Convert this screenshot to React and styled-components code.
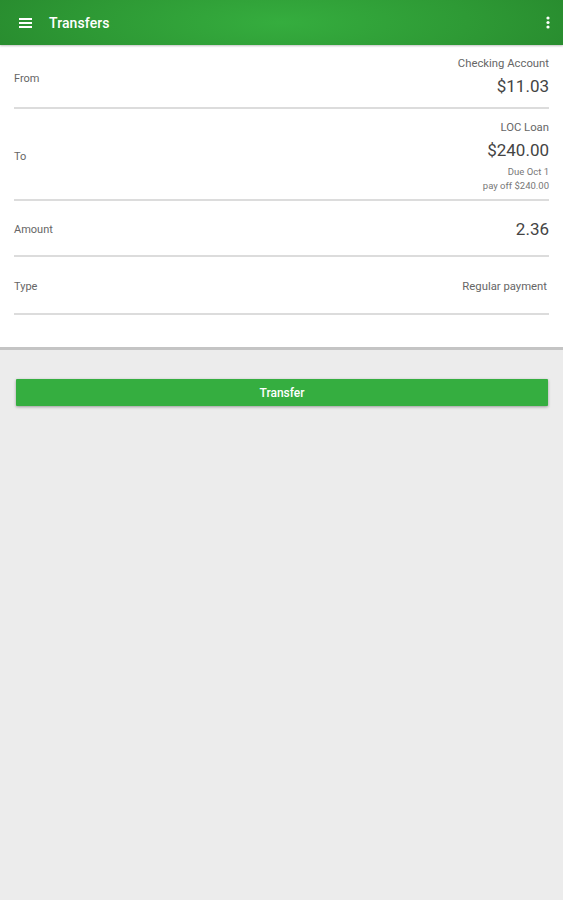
import styled, { createGlobalStyle } from "styled-components";

const Global = createGlobalStyle`
  html, body { margin: 0; padding: 0; background: #ececec; }
  body { font-family: Roboto, "Noto Sans", sans-serif; }
`;

const Page = styled.div`
  width: 563px;
  min-height: 900px;
  background: #ececec;
`;

const Bar = styled.header`
  height: 45px;
  display: flex;
  align-items: center;
  padding: 0 13px 0 19px;
  box-sizing: border-box;
  background: radial-gradient(ellipse 60% 180% at 50% 50%, #35ad3e 0%, #2e9a35 55%, #27882d 100%);
  color: #fff;
  position: relative;
  z-index: 1;
  box-shadow: 0 1px 2px rgba(0, 0, 0, 0.25);
`;

const Title = styled.h1`
  flex: 1;
  margin: 0 0 0 16px;
  font-size: 14px;
  font-weight: 500;
  letter-spacing: 0.1px;
`;

const Panel = styled.section`
  background: #fff;
  padding: 1px 14px 32px;
  border-bottom: 3px solid #c4c4c4;
`;

const Row = styled.div`
  display: flex;
  justify-content: space-between;
  align-items: center;
  height: ${({ h }) => h}px;
  padding-top: ${({ pt }) => pt || 0}px;
  border-bottom: 2px solid #dcdcdc;
  box-sizing: border-box;
`;

const Label = styled.span`
  font-size: 11px;
  color: #666;
`;

const Values = styled.div`
  display: flex;
  flex-direction: column;
  align-items: flex-end;
  padding-right: ${({ pr }) => pr || 0}px;
`;

const Small = styled.span`
  font-size: 11.3px;
  color: #666;
  line-height: 15px;
`;

const Big = styled.span`
  font-size: 17px;
  color: #444;
  line-height: 30px;
`;

const Tiny = styled.span`
  font-size: 9.5px;
  color: #777;
  line-height: 14px;
`;

const Action = styled.div`
  padding: 29px 15px 0 16px;
`;

const Button = styled.button`
  width: 100%;
  height: 27px;
  border: none;
  border-radius: 1px;
  background: #35ae40;
  color: #fff;
  font-family: Roboto, sans-serif;
  font-size: 12px;
  font-weight: 500;
  box-shadow: 0 1px 3px rgba(0, 0, 0, 0.35);
`;

const Menu = () => (
  <svg width="14" height="12" viewBox="0 0 14 12">
    <rect x="0" y="1" width="13" height="2" fill="#fff" />
    <rect x="0" y="5" width="13" height="2" fill="#fff" />
    <rect x="0" y="9" width="13" height="2" fill="#fff" />
  </svg>
);

const More = () => (
  <svg width="4" height="13" viewBox="0 0 4 13">
    <circle cx="2" cy="2" r="1.6" fill="#fff" />
    <circle cx="2" cy="6.5" r="1.6" fill="#fff" />
    <circle cx="2" cy="11" r="1.6" fill="#fff" />
  </svg>
);

export default function App() {
  return (
    <Page>
      <Global />
      <Bar>
        <Menu />
        <Title>Transfers</Title>
        <More />
      </Bar>
      <Panel>
        <Row h={63} pt={4}>
          <Label>From</Label>
          <Values>
            <Small>Checking Account</Small>
            <Big>$11.03</Big>
          </Values>
        </Row>
        <Row h={92} pt={4}>
          <Label>To</Label>
          <Values>
            <Small>LOC Loan</Small>
            <Big>$240.00</Big>
            <Tiny>Due Oct 1</Tiny>
            <Tiny>pay off $240.00</Tiny>
          </Values>
        </Row>
        <Row h={56} pt={2}>
          <Label>Amount</Label>
          <Values>
            <Big>2.36</Big>
          </Values>
        </Row>
        <Row h={58} pt={2}>
          <Label>Type</Label>
          <Values pr={2}>
            <Small>Regular payment</Small>
          </Values>
        </Row>
      </Panel>
      <Action>
        <Button>Transfer</Button>
      </Action>
    </Page>
  );
}
